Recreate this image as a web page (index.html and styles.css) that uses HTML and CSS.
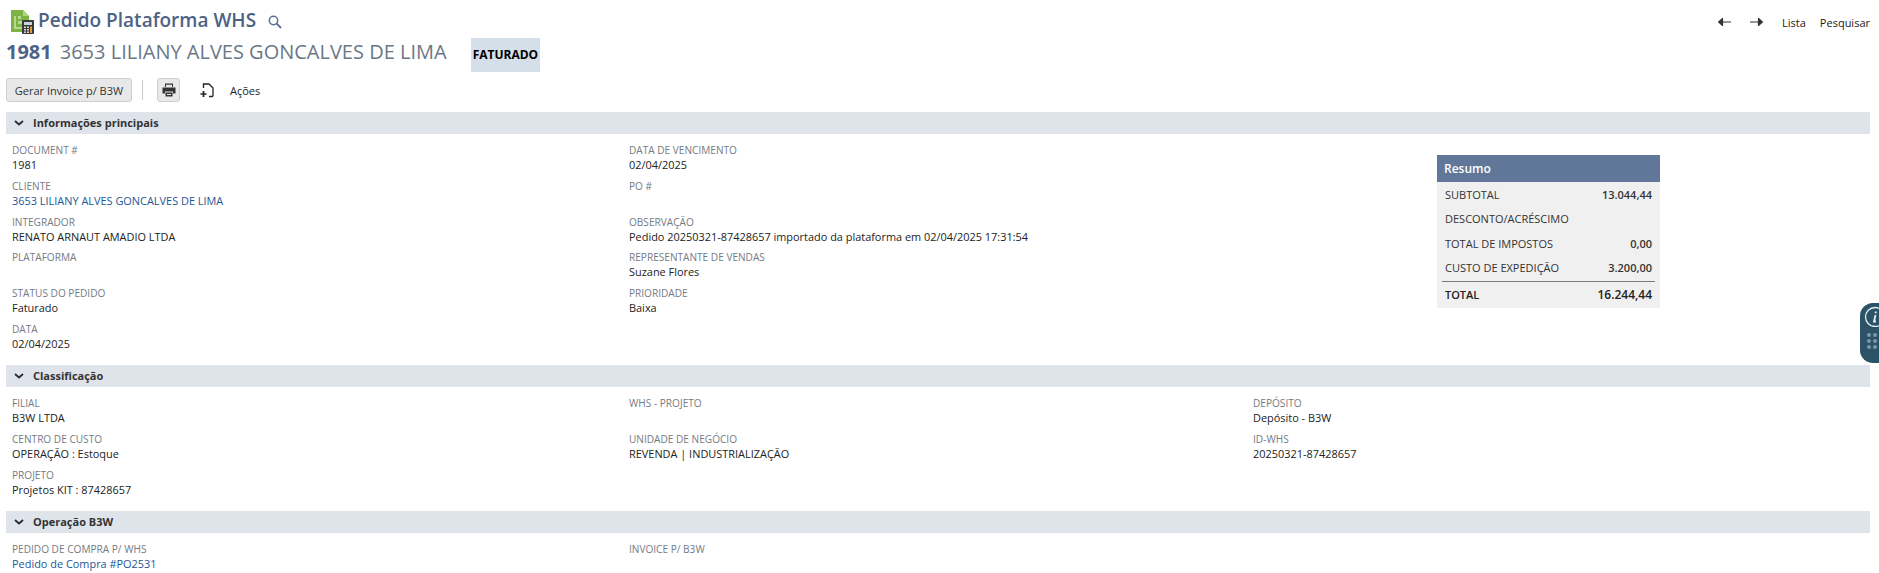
FILE: index.html
```html
<!DOCTYPE html>
<html lang="en">

<head>
    <meta charset="UTF-8">
    <meta name="viewport" content="width=device-width, initial-scale=1.0">
    <title>Pedido Plataforma WHS</title>
    <link rel="stylesheet" href="styles.css">
</head>

<body>
    <div class="page-head">
        <div class="title-row">
            <svg class="record-icon" width="24" height="24" viewBox="0 0 24 24">
                <path d="M1 0H13L19 6V22H1Z" fill="#7cb342" />
                <path d="M13 0L19 6H13Z" fill="#aed581" />
                <path d="M4 6H6V17H14V19H4Z M8 6H11V9H8Z M8 11H14V14H8Z" fill="#b7d98f" />
                <rect x="12" y="10" width="12" height="14" rx="1" fill="#37393b" />
                <rect x="14" y="12" width="8" height="3" fill="#c9d2d6" />
                <path d="M14 16.5h2v1.500h-2z M17 16.500h2v1.500h-2z M14 19h2v1.500h-2z M17 19h2v1.500h-2z M14 21.500h2v1.500h-2z M17 21.500h2v1.500h-2z" fill="#d5d8d8" />
                <rect x="20" y="16.500" width="2" height="6.500" fill="#e8963a" />
            </svg>
            <h1 class="record-type">Pedido Plataforma WHS</h1>
            <svg class="search-icon" width="14" height="14" viewBox="0 0 14 14">
                <circle cx="5.500" cy="5.500" r="4.200" fill="none" stroke="#5a7090" stroke-width="1.500" />
                <path d="M8.700 8.700L13 13" stroke="#5a7090" stroke-width="1.800" />
            </svg>
            <div class="top-links">
                <svg class="arrow" width="13" height="8" viewBox="0 0 13 8">
                    <path d="M13 4H3M4.500 0.500L0.500 4L4.500 7.500Z" fill="#333" stroke="#333" stroke-width="1.200" />
                </svg>
                <svg class="arrow arrow-next" width="13" height="8" viewBox="0 0 13 8">
                    <path d="M0 4H10M8.500 0.500L12.500 4L8.500 7.500Z" fill="#333" stroke="#333" stroke-width="1.200" />
                </svg>
                <a class="top-link">Lista</a>
                <a class="top-link">Pesquisar</a>
            </div>
        </div>
        <div class="name-row">
            <span class="doc-number">1981</span>
            <span class="doc-name">3653 LILIANY ALVES GONCALVES DE LIMA</span>
            <span class="status-badge">FATURADO</span>
        </div>
        <div class="action-row">
            <button class="btn">Gerar Invoice p/ B3W</button>
            <span class="btn-sep"></span>
            <button class="btn btn-icon">
                <svg width="14" height="14" viewBox="0 0 14 14">
                    <path d="M3 0.500H11V4H10V1.700H4V4H3Z M0.500 4.500H13.500V10.500H11V8.500H3V10.500H0.500Z M3.500 9.500H10.500V13.500H3.500Z M5 11V12H9V11Z" fill="#333" fill-rule="evenodd" />
                </svg>
            </button>
            <svg class="add-icon" width="14" height="15" viewBox="0 0 14 15">
                <path d="M3.500 5V1H9L13 5V12.500Q13 13.500 12 13.500H9" fill="none" stroke="#222" stroke-width="1.300" />
                <path d="M3.500 8V14M0.500 11H6.500" stroke="#222" stroke-width="1.700" />
            </svg>
            <a class="actions-link">Ações</a>
        </div>
    </div>

    <div class="section-bar">
        <svg class="chevron" width="10" height="6" viewBox="0 0 10 6">
            <path d="M1 1L5 4.500L9 1" fill="none" stroke="#222b3a" stroke-width="1.800" />
        </svg>
        Informações principais
    </div>
    <div class="fields fields-main">
        <div class="field-col">
            <div class="field"><div class="label">DOCUMENT #</div><div class="value">1981</div></div>
            <div class="field"><div class="label">CLIENTE</div><div class="value"><a class="link">3653 LILIANY ALVES GONCALVES DE LIMA</a></div></div>
            <div class="field"><div class="label">INTEGRADOR</div><div class="value">RENATO ARNAUT AMADIO LTDA</div></div>
            <div class="field"><div class="label">PLATAFORMA</div><div class="value"></div></div>
            <div class="field"><div class="label">STATUS DO PEDIDO</div><div class="value">Faturado</div></div>
            <div class="field"><div class="label">DATA</div><div class="value">02/04/2025</div></div>
        </div>
        <div class="field-col">
            <div class="field"><div class="label">DATA DE VENCIMENTO</div><div class="value">02/04/2025</div></div>
            <div class="field"><div class="label">PO #</div><div class="value"></div></div>
            <div class="field"><div class="label">OBSERVAÇÃO</div><div class="value">Pedido 20250321-87428657 importado da plataforma em 02/04/2025 17:31:54</div></div>
            <div class="field"><div class="label">REPRESENTANTE DE VENDAS</div><div class="value">Suzane Flores</div></div>
            <div class="field"><div class="label">PRIORIDADE</div><div class="value">Baixa</div></div>
        </div>
        <div class="summary-col">
            <div class="summary">
                <div class="summary-head">Resumo</div>
                <div class="summary-row"><span>SUBTOTAL</span><span class="amount">13.044,44</span></div>
                <div class="summary-row"><span>DESCONTO/ACRÉSCIMO</span></div>
                <div class="summary-row"><span>TOTAL DE IMPOSTOS</span><span class="amount">0,00</span></div>
                <div class="summary-row"><span>CUSTO DE EXPEDIÇÃO</span><span class="amount">3.200,00</span></div>
                <div class="summary-total"><span>TOTAL</span><span class="total-amount">16.244,44</span></div>
            </div>
        </div>
    </div>

    <div class="section-bar">
        <svg class="chevron" width="10" height="6" viewBox="0 0 10 6">
            <path d="M1 1L5 4.500L9 1" fill="none" stroke="#222b3a" stroke-width="1.800" />
        </svg>
        Classificação
    </div>
    <div class="fields fields-class">
        <div class="field-col">
            <div class="field"><div class="label">FILIAL</div><div class="value">B3W LTDA</div></div>
            <div class="field"><div class="label">CENTRO DE CUSTO</div><div class="value">OPERAÇÃO : Estoque</div></div>
            <div class="field"><div class="label">PROJETO</div><div class="value">Projetos KIT : 87428657</div></div>
        </div>
        <div class="field-col">
            <div class="field"><div class="label">WHS - PROJETO</div><div class="value"></div></div>
            <div class="field"><div class="label">UNIDADE DE NEGÓCIO</div><div class="value">REVENDA | INDUSTRIALIZAÇÃO</div></div>
        </div>
        <div class="field-col">
            <div class="field"><div class="label">DEPÓSITO</div><div class="value">Depósito - B3W</div></div>
            <div class="field"><div class="label">ID-WHS</div><div class="value">20250321-87428657</div></div>
        </div>
    </div>

    <div class="section-bar">
        <svg class="chevron" width="10" height="6" viewBox="0 0 10 6">
            <path d="M1 1L5 4.500L9 1" fill="none" stroke="#222b3a" stroke-width="1.800" />
        </svg>
        Operação B3W
    </div>
    <div class="fields">
        <div class="field-col">
            <div class="field"><div class="label">PEDIDO DE COMPRA P/ WHS</div><div class="value"><a class="link">Pedido de Compra #PO2531</a></div></div>
        </div>
        <div class="field-col">
            <div class="field"><div class="label">INVOICE P/ B3W</div><div class="value"></div></div>
        </div>
    </div>

    <div class="side-widget">
        <svg width="21" height="21" viewBox="0 0 21 21">
            <circle cx="11" cy="11" r="9.500" fill="none" stroke="#e8eef2" stroke-width="1.300" />
            <path d="M11.500 9L10 15.500H12M11.700 5.500V7.300" fill="none" stroke="#e8eef2" stroke-width="1.800" />
        </svg>
        <div class="widget-dots">
            <i></i><i></i><i></i><i></i><i></i><i></i><i></i><i></i><i></i>
        </div>
    </div>
</body>

</html>
```

FILE: styles.css
```css
html,
body {
    height: 100%;
}

body {
    font-family: "Open Sans", Arial, sans-serif;
    font-size: 11px;
    color: #222;
    background: #fff;
    margin: 0;
    padding: 0 9px 0 6px;
    overflow: hidden;
    position: relative;
}

.page-head {
    height: 112px;
}

.title-row {
    display: flex;
    align-items: center;
    height: 38px;
    padding: 2px 0 0 4px;
    box-sizing: border-box;
}

.record-icon {
    margin: 3px 4px 0 0;
}

.record-type {
    font-size: 19px;
    font-weight: 600;
    color: #4d6285;
    margin: 0;
}

.search-icon {
    margin: 3px 0 0 12px;
}

.top-links {
    display: flex;
    align-items: center;
    margin-left: auto;
    padding-top: 4px;
    font-size: 11px;
    color: #222;
}

.arrow-next {
    margin: 0 19px 0 19px;
}

.top-link {
    margin-left: 14px;
}

.top-link:first-of-type {
    margin-left: 0;
}

.name-row {
    display: flex;
    align-items: center;
    height: 34px;
}

.doc-number {
    font-size: 20px;
    font-weight: 700;
    color: #4d6285;
    margin: 0 8px 7px 0;
}

.doc-name {
    font-size: 20px;
    color: #6b7787;
    margin-bottom: 7px;
}

.status-badge {
    background: #d5dfea;
    color: #000;
    font-size: 12px;
    font-weight: 700;
    padding: 0 2px;
    height: 34px;
    line-height: 34px;
    margin-left: 24px;
}

.action-row {
    display: flex;
    align-items: center;
    height: 24px;
    margin-top: 6px;
}

.btn {
    font-family: inherit;
    font-size: 11px;
    color: #333;
    background: #e8e8e8;
    border: 1px solid #cfcfcf;
    border-radius: 3px;
    height: 24px;
    width: 126px;
    padding: 0;
    box-sizing: border-box;
    white-space: nowrap;
}

.btn-icon {
    width: 23px;
    display: flex;
    align-items: center;
    justify-content: center;
}

.btn-sep {
    width: 1px;
    height: 20px;
    background: #ccc;
    margin: 0 14px 0 10px;
}

.add-icon {
    margin: 0 16px 0 20px;
}

.actions-link {
    font-size: 11px;
    color: #222;
}

.section-bar {
    display: flex;
    align-items: center;
    height: 22px;
    padding-bottom: 1px;
    box-sizing: border-box;
    background: #dfe4eb;
    font-size: 11px;
    font-weight: 700;
    color: #333;
}

.chevron {
    margin: 0 9px 0 8px;
}

.fields {
    display: grid;
    grid-template-columns: 617px 624px 1fr;
    padding: 9px 7px 0 6px;
}

.fields-main {
    height: 231px;
    box-sizing: border-box;
}

.fields-class {
    height: 124px;
    box-sizing: border-box;
}

.field {
    height: 35.800px;
}

.label {
    font-size: 10.100px;
    line-height: 14px;
    color: #757b84;
}

.value {
    font-size: 10.930px;
    line-height: 15px;
    color: #222;
}

.link {
    color: #255694;
}

.summary-col {
    padding: 12px 0 0 184px;
}

.summary {
    width: 223px;
    height: 153px;
    background: #f0f0f0;
}

.summary-head {
    background: #607799;
    color: #fff;
    font-size: 12px;
    font-weight: 600;
    height: 27px;
    line-height: 27px;
    padding-left: 7px;
}

.summary-row {
    display: flex;
    justify-content: space-between;
    align-items: center;
    height: 24.500px;
    padding: 0 8px;
    font-size: 11px;
    color: #333;
}

.amount {
    font-size: 11px;
    font-weight: 600;
}

.summary-total {
    display: flex;
    justify-content: space-between;
    align-items: center;
    height: 27px;
    margin: 1px 5px 0;
    padding: 0 3px 1px;
    box-sizing: border-box;
    border-top: 1px solid #7a7a7a;
    font-weight: 600;
    font-size: 11px;
}

.total-amount {
    font-size: 12px;
    font-weight: 600;
}

.side-widget {
    position: absolute;
    right: -22px;
    top: 303px;
    width: 41px;
    height: 60px;
    background: #2c5268;
    border-radius: 13px 0 0 13px;
    padding: 3px 0 0 4px;
    box-sizing: border-box;
}

.side-widget svg {
    display: block;
}

.widget-dots {
    display: grid;
    grid-template-columns: repeat(3, 4px);
    gap: 2px;
    margin: 6px 0 0 3px;
}

.widget-dots i {
    width: 4px;
    height: 4px;
    border-radius: 50%;
    background: #7d97a6;
}
```
